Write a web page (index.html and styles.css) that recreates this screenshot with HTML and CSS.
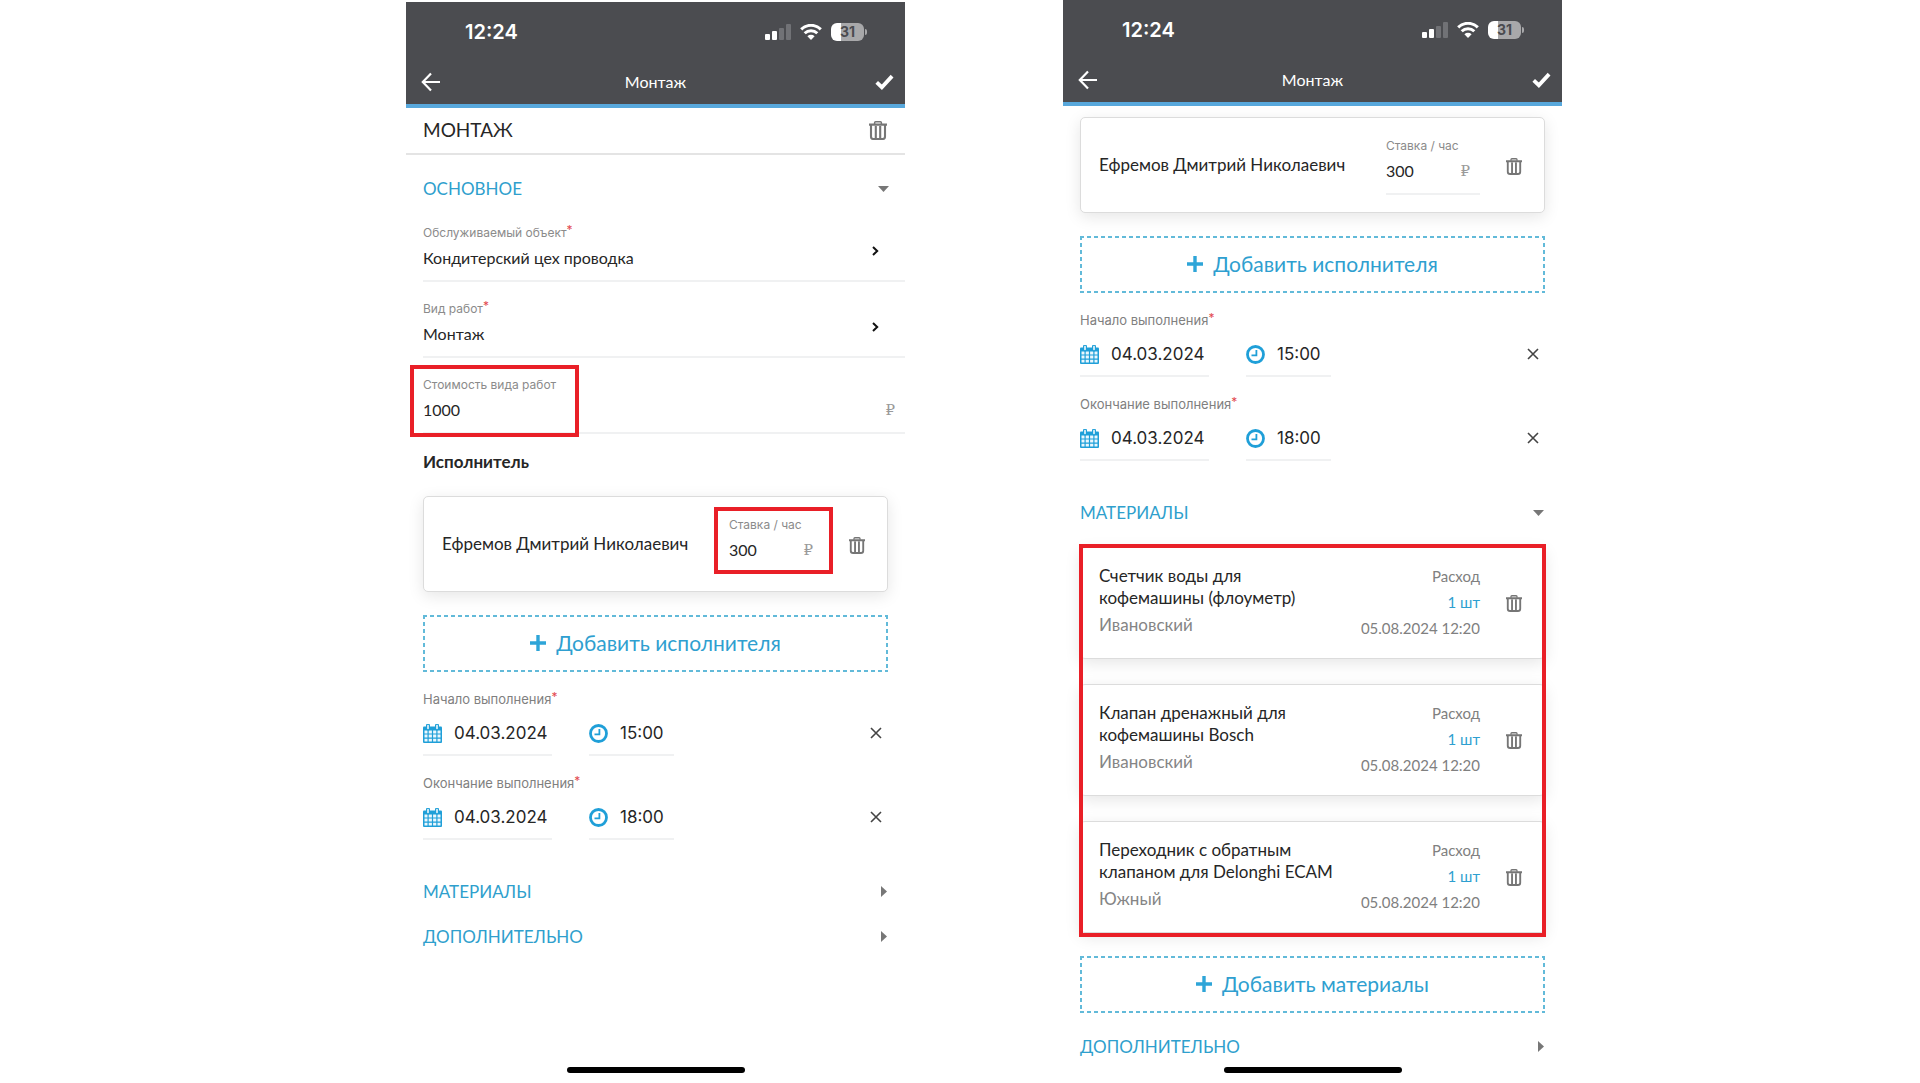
FILE: index.html
```html
<!DOCTYPE html>
<html lang="ru">
<head>
<meta charset="utf-8">
<meta name="viewport" content="width=device-width, initial-scale=1">
<title>Монтаж</title>
<link rel="stylesheet" href="styles.css">
</head>
<body>
<svg class="sprite" aria-hidden="true">
  <symbol id="signal" viewBox="0 0 26 16">
    <rect x="0" y="10" width="5" height="6" rx="1" fill="#fff"/>
    <rect x="7" y="7" width="5" height="9" rx="1" fill="#fff"/>
    <rect x="14" y="4" width="5" height="12" rx="1" fill="#717276"/>
    <rect x="21" y="0" width="5" height="16" rx="1" fill="#717276"/>
  </symbol>
  <symbol id="wifi" viewBox="0 0 22 16">
    <path d="M1.200 5.400a13.800 13.800 0 0 1 19.600 0M4.700 9.300a9 9 0 0 1 12.600 0" fill="none" stroke="#fff" stroke-width="3"/>
    <path d="M11 16l-3.600-3.700a5.200 5.200 0 0 1 7.200 0z" fill="#fff"/>
  </symbol>
  <symbol id="back" viewBox="0 0 20 20">
    <path d="M19 10H2M10 1.500L1.800 10l8.200 8.500" fill="none" stroke="#fff" stroke-width="2.200"/>
  </symbol>
  <symbol id="check" viewBox="0 0 20 16">
    <path d="M1.800 8.500l5.400 5L18 1.800" fill="none" stroke="#fff" stroke-width="4"/>
  </symbol>
  <symbol id="trash" viewBox="0 0 18 19">
    <path d="M0 3.600h18M2 4v11.400q0 2.600 2.600 2.600h8.800q2.600 0 2.600-2.600V4M6.800 5v12.500M11.200 5v12.500" fill="none" stroke="#767676" stroke-width="2.100"/>
    <path d="M5.600 3V1.800q0-1 1-1h4.800q1 0 1 1V3" fill="none" stroke="#767676" stroke-width="1.500"/>
  </symbol>
  <symbol id="chevron" viewBox="0 0 7 10">
    <path d="M1 1l4.200 4L1 9" fill="none" stroke="#111" stroke-width="2"/>
  </symbol>
  <symbol id="down" viewBox="0 0 11 6"><path d="M0 0h11L5.500 6z" fill="#777"/></symbol>
  <symbol id="right" viewBox="0 0 6 11"><path d="M0 0l6 5.500L0 11z" fill="#777"/></symbol>
  <symbol id="plus" viewBox="0 0 16 16"><path d="M8 0v16M0 8h16" stroke="#2ea5d8" stroke-width="3.400"/></symbol>
  <symbol id="calendar" viewBox="0 0 19 19">
    <path d="M1 2.500h17q1 0 1 1V18q0 1-1 1H1q-1 0-1-1V3.500q0-1 1-1z" fill="#1f9fd8"/>
    <path d="M1.500 6.500h3v3h-3zM5.700 6.500h3.200v3H5.700zM10.100 6.500h3.200v3h-3.200zM14.500 6.500h3v3h-3zM1.500 10.600h3v3h-3zM5.700 10.600h3.200v3H5.700zM10.100 10.600h3.200v3h-3.200zM14.500 10.600h3v3h-3zM1.500 14.700h3v2.800h-3zM5.700 14.700h3.200v2.800H5.700zM10.100 14.700h3.200v2.800h-3.200zM14.500 14.700h3v2.800h-3z" fill="#eaf7fd"/>
    <path d="M5 1.500v3M14 1.500v3" stroke="#1f9fd8" stroke-width="4" stroke-linecap="round"/>
    <path d="M5 1.500v3M14 1.500v3" stroke="#fff" stroke-width="1.500" stroke-linecap="round"/>
  </symbol>
  <symbol id="clock" viewBox="0 0 19 19">
    <circle cx="9.500" cy="9.500" r="8" fill="none" stroke="#1f9fd8" stroke-width="2.800"/>
    <path d="M10.400 5v5.300H5.500" fill="none" stroke="#1f9fd8" stroke-width="1.800"/>
  </symbol>
  <symbol id="close" viewBox="0 0 12 12"><path d="M1 1l10 10M11 1L1 11" stroke="#444" stroke-width="1.600"/></symbol>
</svg>

<main class="screens">
  <section class="phone phone-first">
    <header class="top">
      <div class="status">
        <span class="clock">12:24</span>
        <svg class="i-signal"><use href="#signal"/></svg>
        <svg class="i-wifi"><use href="#wifi"/></svg>
        <span class="battery">31</span>
      </div>
      <nav class="bar">
        <button class="icon-btn" aria-label="Назад"><svg class="i-back"><use href="#back"/></svg></button>
        <span class="bar-title">Монтаж</span>
        <button class="icon-btn" aria-label="Готово"><svg class="i-check"><use href="#check"/></svg></button>
      </nav>
    </header>
    <div class="heading">
      <h1>МОНТАЖ</h1>
      <button class="icon-btn" aria-label="Удалить"><svg class="i-trash-lg"><use href="#trash"/></svg></button>
    </div>
    <button class="section section-lead">ОСНОВНОЕ<svg class="i-down"><use href="#down"/></svg></button>

    <div class="field">
      <label class="label" for="object">Обслуживаемый объект<sup>*</sup></label>
      <div class="value-row"><input class="value" id="object" value="Кондитерский цех проводка" readonly>
        <button class="icon-btn pick" aria-label="Выбрать объект"><svg class="i-chevron"><use href="#chevron"/></svg></button></div>
    </div>
    <div class="field">
      <label class="label" for="kind">Вид работ<sup>*</sup></label>
      <div class="value-row"><input class="value" id="kind" value="Монтаж" readonly>
        <button class="icon-btn pick" aria-label="Выбрать вид работ"><svg class="i-chevron"><use href="#chevron"/></svg></button></div>
    </div>
    <div class="field marked-cost">
      <label class="label" for="cost">Стоимость вида работ</label>
      <div class="value-row"><input class="value" id="cost" value="1000"><span class="rub">₽</span></div>
    </div>

    <div class="content">
      <h2 class="subhead">Исполнитель</h2>
      <article class="card worker">
        <span class="name">Ефремов Дмитрий Николаевич</span>
        <div class="rate marked-rate">
          <label class="label" for="rate1">Ставка / час</label>
          <div class="value-row"><input class="value" id="rate1" value="300"><span class="rub">₽</span></div>
        </div>
        <button class="icon-btn" aria-label="Удалить исполнителя"><svg class="i-trash"><use href="#trash"/></svg></button>
      </article>
      <button class="add"><svg class="i-plus"><use href="#plus"/></svg>Добавить исполнителя</button>

      <div class="period">
        <label class="label label-wide" for="start1">Начало выполнения<sup>*</sup></label>
        <div class="period-row">
          <span class="date"><svg class="i-period"><use href="#calendar"/></svg><input id="start1" value="04.03.2024"></span>
          <span class="time"><svg class="i-period"><use href="#clock"/></svg><input aria-label="Время начала" value="15:00"></span>
          <button class="icon-btn clear" aria-label="Очистить"><svg class="i-close"><use href="#close"/></svg></button>
        </div>
      </div>
      <div class="period">
        <label class="label label-wide" for="end1">Окончание выполнения<sup>*</sup></label>
        <div class="period-row">
          <span class="date"><svg class="i-period"><use href="#calendar"/></svg><input id="end1" value="04.03.2024"></span>
          <span class="time"><svg class="i-period"><use href="#clock"/></svg><input aria-label="Время окончания" value="18:00"></span>
          <button class="icon-btn clear" aria-label="Очистить"><svg class="i-close"><use href="#close"/></svg></button>
        </div>
      </div>
    </div>
    <div class="sections">
      <button class="section">МАТЕРИАЛЫ<svg class="i-right"><use href="#right"/></svg></button>
      <button class="section">ДОПОЛНИТЕЛЬНО<svg class="i-right"><use href="#right"/></svg></button>
    </div>
    <div class="home"></div>
  </section>

  <section class="phone phone-second">
    <header class="top">
      <div class="status">
        <span class="clock">12:24</span>
        <svg class="i-signal"><use href="#signal"/></svg>
        <svg class="i-wifi"><use href="#wifi"/></svg>
        <span class="battery">31</span>
      </div>
      <nav class="bar">
        <button class="icon-btn" aria-label="Назад"><svg class="i-back"><use href="#back"/></svg></button>
        <span class="bar-title">Монтаж</span>
        <button class="icon-btn" aria-label="Готово"><svg class="i-check"><use href="#check"/></svg></button>
      </nav>
    </header>
    <div class="content content-scrolled">
      <article class="card worker">
        <span class="name">Ефремов Дмитрий Николаевич</span>
        <div class="rate">
          <label class="label" for="rate2">Ставка / час</label>
          <div class="value-row"><input class="value" id="rate2" value="300"><span class="rub">₽</span></div>
        </div>
        <button class="icon-btn" aria-label="Удалить исполнителя"><svg class="i-trash"><use href="#trash"/></svg></button>
      </article>
      <button class="add"><svg class="i-plus"><use href="#plus"/></svg>Добавить исполнителя</button>

      <div class="period">
        <label class="label label-wide" for="start2">Начало выполнения<sup>*</sup></label>
        <div class="period-row">
          <span class="date"><svg class="i-period"><use href="#calendar"/></svg><input id="start2" value="04.03.2024"></span>
          <span class="time"><svg class="i-period"><use href="#clock"/></svg><input aria-label="Время начала" value="15:00"></span>
          <button class="icon-btn clear" aria-label="Очистить"><svg class="i-close"><use href="#close"/></svg></button>
        </div>
      </div>
      <div class="period">
        <label class="label label-wide" for="end2">Окончание выполнения<sup>*</sup></label>
        <div class="period-row">
          <span class="date"><svg class="i-period"><use href="#calendar"/></svg><input id="end2" value="04.03.2024"></span>
          <span class="time"><svg class="i-period"><use href="#clock"/></svg><input aria-label="Время окончания" value="18:00"></span>
          <button class="icon-btn clear" aria-label="Очистить"><svg class="i-close"><use href="#close"/></svg></button>
        </div>
      </div>
    </div>
    <div class="sections">
      <button class="section">МАТЕРИАЛЫ<svg class="i-down"><use href="#down"/></svg></button>
    </div>
    <div class="content">
      <div class="materials">
        <article class="card material">
          <div class="item"><h3>Счетчик воды для<br>кофемашины (флоуметр)</h3><p>Ивановский</p></div>
          <div class="usage"><span>Расход</span><b>1 шт</b><time>05.08.2024 12:20</time></div>
          <button class="icon-btn" aria-label="Удалить материал"><svg class="i-trash"><use href="#trash"/></svg></button>
        </article>
        <article class="card material">
          <div class="item"><h3>Клапан дренажный для<br>кофемашины Bosch</h3><p>Ивановский</p></div>
          <div class="usage"><span>Расход</span><b>1 шт</b><time>05.08.2024 12:20</time></div>
          <button class="icon-btn" aria-label="Удалить материал"><svg class="i-trash"><use href="#trash"/></svg></button>
        </article>
        <article class="card material">
          <div class="item"><h3>Переходник с обратным<br>клапаном для Delonghi ECAM</h3><p>Южный</p></div>
          <div class="usage"><span>Расход</span><b>1 шт</b><time>05.08.2024 12:20</time></div>
          <button class="icon-btn" aria-label="Удалить материал"><svg class="i-trash"><use href="#trash"/></svg></button>
        </article>
      </div>
      <button class="add"><svg class="i-plus"><use href="#plus"/></svg>Добавить материалы</button>
    </div>
    <div class="sections sections-last">
      <button class="section">ДОПОЛНИТЕЛЬНО<svg class="i-right"><use href="#right"/></svg></button>
    </div>
    <div class="home"></div>
  </section>
</main>
</body>
</html>
```
FILE: styles.css
```css
*, *::after { box-sizing: border-box; }
body { margin: 0; background: #fff; color: #262626; font-family: Lato, "Noto Sans", sans-serif; }
h1, h2, h3, p { margin: 0; font-weight: 400; }
button, input { font: inherit; color: inherit; border: 0; background: none; padding: 0; margin: 0; min-width: 0; border-radius: 0; }
input { width: 100%; }
svg { display: block; flex: none; }
.sprite { position: absolute; width: 0; height: 0; }

.screens { display: grid; grid-template-columns: 406fr 499fr 158fr 499fr 358fr; min-height: 100vh; }
.phone { position: relative; min-width: 0; overflow: hidden; background: #fff; }
.phone-first { grid-column: 2; margin-top: 2px; }
.phone-second { grid-column: 4; }

.top { background: #4b4c50; border-bottom: 4px solid #58a8dc; color: #fff; }
.status { display: flex; align-items: center; height: 60px; padding: 0 41px 0 59px; }
.clock { flex: 1; font: 600 20px/24px Inter, sans-serif; }
.i-signal { width: 26px; height: 16px; margin-right: 9px; }
.i-wifi { width: 22px; height: 16px; margin-right: 9px; }
.battery { position: relative; width: 33px; height: 18px; border-radius: 6px; background: linear-gradient(90deg, #fff 31%, #a8a8aa 31%); color: #4b4c50; font: 700 14px/18px Inter, sans-serif; text-align: center; }
.battery::after { content: ""; position: absolute; left: 34px; top: 6px; width: 2px; height: 6px; border-radius: 0 2px 2px 0; background: #a8a8aa; }
.bar { display: grid; grid-template-columns: 1fr auto 1fr; align-items: center; height: 42px; padding: 0 11px 3px 15px; }
.bar-title { padding-right: 4px; font-size: 16px; line-height: 24px; }
.icon-btn { display: block; flex: none; cursor: pointer; }
.bar .icon-btn:last-child { justify-self: end; }
.bar .icon-btn:first-child { justify-self: start; }
.i-back { width: 20px; height: 20px; }
.i-check { width: 19px; height: 16px; }

.heading { display: flex; align-items: center; justify-content: space-between; height: 47px; padding: 0 18px 0 17px; border-bottom: 2px solid #e4e4e4; }
.heading h1 { padding-bottom: 2px; font-size: 19px; line-height: 24px; }
.i-trash-lg { width: 18px; height: 19px; }
.i-trash { width: 16px; height: 17px; }

.section { display: flex; align-items: center; justify-content: space-between; width: 100%; height: 45px; padding: 0 18px 0 17px; color: #2f9fcd; font-size: 17px; line-height: 22px; cursor: pointer; }
.section-lead { height: 51px; padding-top: 17px; padding-right: 16px; }
.sections { margin-top: 29px; }
.sections-last { margin-top: 11px; }
.i-down { width: 11px; height: 6px; }
.i-right { width: 6px; height: 11px; }

.field { position: relative; margin-left: 17px; padding: 19px 0 10px; border-bottom: 2px solid #f0f1f2; }
.label { display: block; color: #8b8b8b; font: 12px/16px Inter, sans-serif; white-space: nowrap; }
.label-wide { font-size: 13px; color: #808080; }
.label sup { color: #e2494f; font-size: 12px; line-height: 0; vertical-align: 3px; }
.value-row { display: flex; align-items: center; height: 24px; margin-top: 5px; }
.value { font-size: 16px; line-height: 24px; }
.pick { margin: 0 26px 14px 0; }
.i-chevron { width: 7px; height: 10px; }
.rub { margin-right: 10px; color: #9a9a9a; font: 15px/20px "Liberation Serif", "DejaVu Serif", serif; }

.marked-cost::after, .marked-rate::after, .materials::after { content: ""; position: absolute; border: 4px solid #e91f27; pointer-events: none; }
.marked-cost::after { left: -13px; top: 7px; width: 169px; height: 72px; }
.marked-rate::after { inset: -10px -10px -2px -15px; }

.content { padding: 0 17px; }
.content-scrolled { padding-top: 11px; }
.subhead { padding: 17px 0 23px; font-size: 17px; font-weight: 700; line-height: 22px; }
.card { display: flex; align-items: center; border: 1px solid #dcdcdc; border-radius: 5px; background: #fff; box-shadow: 0 4px 16px rgba(0, 0, 0, .1); padding: 0 22px 0 18px; }
.worker { height: 96px; padding-top: 2px; }
.name { flex: 1; padding-bottom: 2px; font-size: 17px; line-height: 22px; white-space: nowrap; }
.rate { position: relative; width: 94px; margin-right: 26px; padding-bottom: 10px; border-bottom: 2px solid #f0f1f2; }
.add {
  display: flex; align-items: center; justify-content: center; gap: 10px;
  width: 100%; height: 57px; margin-top: 23px; padding-bottom: 2px;
  color: #2f9fd0; font-size: 21px; line-height: 28px; cursor: pointer;
  --across: repeating-linear-gradient(90deg, #62bad9 0 4px, transparent 4px 7px);
  --along: repeating-linear-gradient(180deg, #62bad9 0 4px, transparent 4px 7px);
  background: var(--across) top / 100% 2px no-repeat, var(--across) bottom / 100% 2px no-repeat, var(--along) left / 2px 100% no-repeat, var(--along) right / 2px 100% no-repeat;
}
.i-plus { width: 16px; height: 16px; }

.period { padding-top: 19px; }
.period-row { display: flex; align-items: center; margin-top: 14px; font: 17px/24px Inter, sans-serif; }
.date, .time { display: flex; align-items: center; gap: 12px; height: 35px; padding-bottom: 9px; border-bottom: 2px solid #f0f1f2; }
.date { width: 129px; margin-right: 37px; }
.time { width: 85px; }
.i-period { width: 19px; height: 19px; }
.clear { margin: 0 6px 11px auto; }
.i-close { width: 12px; height: 12px; }

.materials { position: relative; display: grid; gap: 25px; margin-top: 12px; }
.materials::after { inset: -3px -1px -4px; }
.material { height: 112px; }
.item { flex: 1; min-width: 0; white-space: nowrap; padding-bottom: 5px; }
.item h3 { font-size: 17px; line-height: 22px; }
.item p { margin-top: 5px; color: #858585; font-size: 17px; line-height: 22px; }
.usage { display: flex; flex-direction: column; align-items: flex-end; margin-right: 26px; padding-bottom: 2px; color: #808080; font-size: 15px; line-height: 26px; white-space: nowrap; }
.usage b { color: #2f9fd0; font-weight: 400; }

.home { position: absolute; left: 50%; bottom: 10px; width: 178px; height: 6px; margin-left: -89px; border-radius: 3px; background: #000; }

@media (max-width: 1300px) {
  .screens { grid-template-columns: minmax(0, 1fr) minmax(0, 1fr); gap: 24px; }
  .phone-first { grid-column: 1; }
  .phone-second { grid-column: 2; }
}
@media (max-width: 900px) {
  .screens { grid-template-columns: minmax(0, 1fr); }
  .phone-second { grid-column: 1; padding-bottom: 24px; }
  .phone-first { padding-bottom: 40px; }
}
```
